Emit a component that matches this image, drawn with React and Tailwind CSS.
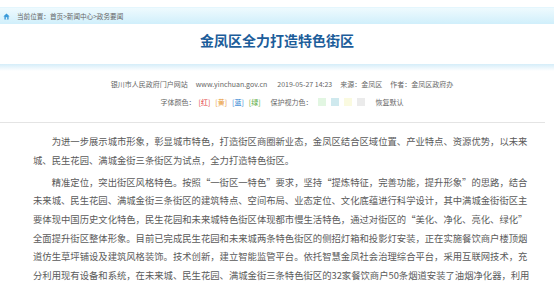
import React from 'react';

const cjk = { fontFamily: '"Noto Sans CJK SC", "Liberation Sans", sans-serif' };

const fontColors = [
  { label: '红', cls: 'text-[#e23a3a]' },
  { label: '黄', cls: 'text-[#e8962c]' },
  { label: '蓝', cls: 'text-[#2e7fd1]' },
  { label: '绿', cls: 'text-[#56a83a]' },
];

const eyeColors = ['bg-[#e2f6e2]', 'bg-[#cfe9ee]', 'bg-[#fafae0]', 'bg-[#ebebeb]'];

// 引号处加零宽空格，方便换行
const fixQuotes = (s) => s.replace(/“/g, '\u200B“').replace(/”/g, '”\u200B');

const paragraphs = [
  '为进一步展示城市形象，彰显城市特色，打造街区商圈新业态，金凤区结合区域位置、产业特点、资源优势，以未来城、民生花园、满城金街三条街区为试点，全力打造特色街区。',
  '精准定位，突出街区风格特色。按照“一街区一特色”要求，坚持“提炼特征，完善功能，提升形象”的思路，结合未来城、民生花园、满城金街三条街区的建筑特点、空间布局、业态定位、文化底蕴进行科学设计，其中满城金街街区主要体现中国历史文化特色，民生花园和未来城特色街区体现都市慢生活特色，通过对街区的“美化、净化、亮化、绿化”全面提升街区整体形象。目前已完成民生花园和未来城两条特色街区的侧招灯箱和投影灯安装，正在实施餐饮商户楼顶烟道仿生草坪铺设及建筑风格装饰。技术创新，建立智能监管平台。依托智慧金凤社会治理综合平台，采用互联网技术，充分利用现有设备和系统，在未来城、民生花园、满城金街三条特色街区的32家餐饮商户50条烟道安装了油烟净化器，利用物联网技术对油烟排放情况进行实时监测。',
];

function HomeIcon() {
  return (
    <svg width="7" height="7" viewBox="0 0 10 10">
      <path d="M5 0.8 L0.5 5 H2 V9.4 H8 V5 H9.5 Z" fill="#3a9ad9" />
      <rect x="4" y="6" width="2" height="3.4" fill="#e6f7fd" />
    </svg>
  );
}

export default function App() {
  return (
    <div className="w-[554px] h-[288px] overflow-hidden bg-white" style={cjk}>
      {/* 面包屑 */}
      <div className="mt-[7px] h-[17px] flex items-center pl-[3px] gap-[7px] bg-gradient-to-b from-[#eefafe] to-[#d0effb] border-t border-[#e4f6fd]">
        <HomeIcon />
        <span className="text-[6.6px] text-[#666] leading-none">当前位置：首页&gt;新闻中心&gt;政务要闻</span>
      </div>

      {/* 标题 */}
      <div className="h-[32px] flex items-center justify-center">
        <h1 className="text-[14px] font-bold text-[#1c5d9a] leading-none">金凤区全力打造特色街区</h1>
      </div>

      <div className="mt-[8px] h-[7px] bg-gradient-to-b from-[#d5edf9] to-white" />

      {/* 信息 */}
      <div className="pl-[10px] text-[7px] text-[#666] leading-[10px]">
        <div className="mt-[8px] flex justify-center gap-[8px]">
          <span>银川市人民政府门户网站</span>
          <span>www.yinchuan.gov.cn</span>
          <span className="ml-[2px]">2019-05-27 14:23</span>
          <span>来源：金凤区</span>
          <span>作者：金凤区政府办</span>
        </div>
        <div className="mt-[8px] flex justify-center items-center">
          <span>字体颜色：</span>
          <div className="flex gap-[5px] ml-[3px]">
            {fontColors.map((c) => (
              <span key={c.label} className={c.cls}>[{c.label}]</span>
            ))}
          </div>
          <span className="ml-[10px]">保护视力色：</span>
          <div className="flex gap-[5px] ml-[5px]">
            {eyeColors.map((c) => (
              <span key={c} className={`w-[8px] h-[8px] ${c}`} />
            ))}
          </div>
          <span className="ml-[11px]">恢复默认</span>
        </div>
      </div>

      <div className="mt-[15px] mr-[9px] h-px bg-[#e4e4e4]" />

      {/* 正文 */}
      <div className="pt-[9px] pl-[33px] w-[530px] text-[9.33px] leading-[18.67px] text-[#5a5a5a]">
        {paragraphs.map((p, i) => (
          <p key={i} className="indent-[2em] mb-[3.3px]">{fixQuotes(p)}</p>
        ))}
      </div>
    </div>
  );
}
